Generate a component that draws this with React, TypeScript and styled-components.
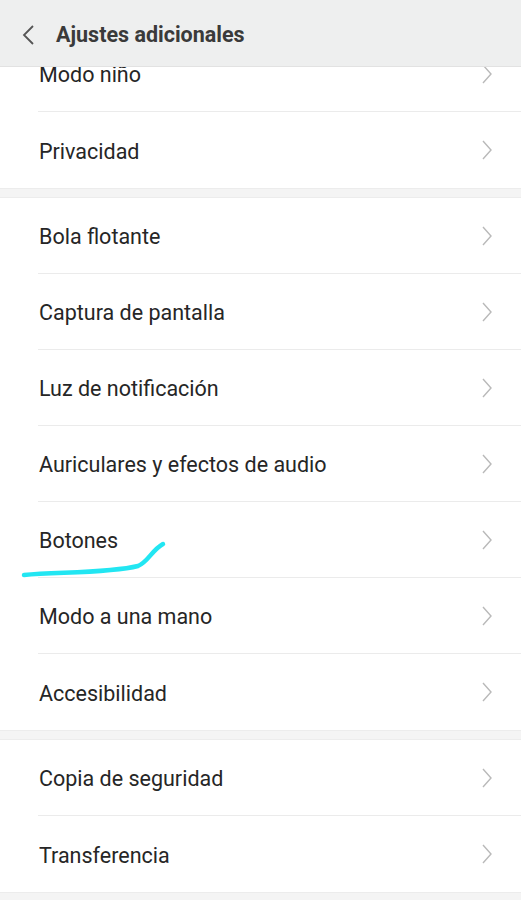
import React from "react";
import styled, { createGlobalStyle } from "styled-components";

const GlobalStyle = createGlobalStyle`
  html, body {
    margin: 0;
    padding: 0;
    background: #f4f4f4;
    font-family: Roboto, "Noto Sans", "Liberation Sans", sans-serif;
  }
`;

const Page = styled.div`
  position: relative;
  width: 521px;
  height: 900px;
  overflow: hidden;
  display: flex;
  flex-direction: column;
  background: #f4f4f4;
`;

const Header = styled.div`
  flex: 0 0 67px;
  display: flex;
  align-items: center;
  gap: 20px;
  padding: 3px 0 0 20px;
  background: #eeefef;
  border-bottom: 1px solid #e2e2e2;
  box-sizing: border-box;
  z-index: 1;
`;

const Title = styled.h1`
  margin: 0;
  font-size: 21.5px;
  font-weight: 700;
  color: #3a3a3a;
`;

const Viewport = styled.div`
  flex: 1;
  overflow: hidden;
  display: flex;
  flex-direction: column;
  gap: 10px;
`;

const Section = styled.div<{ $shift?: number }>`
  background: #fff;
  margin-top: ${({ $shift }) => ($shift ? `-${$shift}px` : "0")};
  box-shadow: 0 1px 0 #ececec, 0 -1px 0 #ececec;
`;

const Row = styled.div<{ $last?: boolean }>`
  height: 76px;
  margin-left: 38px;
  padding-right: 28px;
  display: flex;
  align-items: center;
  justify-content: space-between;
  border-bottom: ${({ $last }) => ($last ? "none" : "1px solid #ebebeb")};
  box-sizing: border-box;
`;

const Label = styled.span`
  font-size: 21.5px;
  color: #262626;
  margin-left: 1px;
  padding-top: 2px;
`;

const Mark = styled.svg`
  position: absolute;
  left: 0;
  top: 0;
  pointer-events: none;
`;

const Chevron = () => (
  <svg width="12" height="22" viewBox="0 0 12 22">
    <path d="M2 2 L10 11 L2 20" fill="none" stroke="#b9b9b9" strokeWidth="1.4" />
  </svg>
);

const Back = () => (
  <svg width="16" height="22" viewBox="0 0 16 22">
    <path d="M13 2 L4 11 L13 20" fill="none" stroke="#555" strokeWidth="1.8" />
  </svg>
);

const groups = [
  ["Modo niño", "Privacidad"],
  [
    "Bola flotante",
    "Captura de pantalla",
    "Luz de notificación",
    "Auriculares y efectos de audio",
    "Botones",
    "Modo a una mano",
    "Accesibilidad",
  ],
  ["Copia de seguridad", "Transferencia"],
];

export default function App() {
  return (
    <Page>
      <GlobalStyle />
      <Header>
        <Back />
        <Title>Ajustes adicionales</Title>
      </Header>
      <Viewport>
        {groups.map((items, g) => (
          <Section key={g} $shift={g === 0 ? 31 : 0}>
            {items.map((item, i) => (
              <Row key={item} $last={i === items.length - 1}>
                <Label>{item}</Label>
                <Chevron />
              </Row>
            ))}
          </Section>
        ))}
      </Viewport>
      <Mark width="521" height="900" viewBox="0 0 521 900">
        <path
          d="M24 575 C 60 572, 110 573, 138 566 C 148 562, 152 550, 163 544"
          fill="none"
          stroke="#22e6f2"
          strokeWidth="4.5"
          strokeLinecap="round"
        />
      </Mark>
    </Page>
  );
}
